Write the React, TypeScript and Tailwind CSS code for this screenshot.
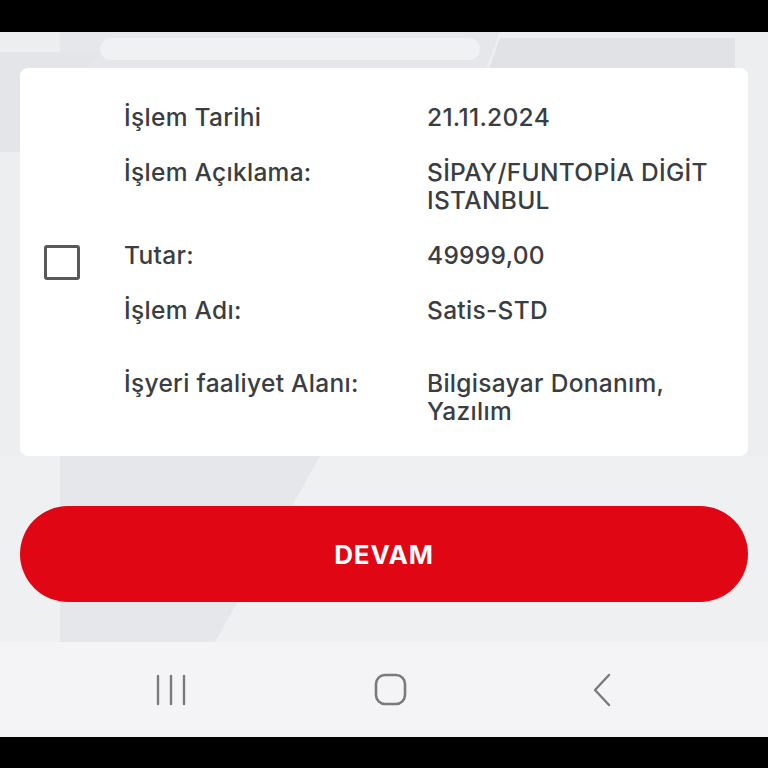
import React from "react";

const rows: { label: string; value: string[] }[] = [
  { label: "İşlem Tarihi", value: ["21.11.2024"] },
  { label: "İşlem Açıklama:", value: ["SİPAY/FUNTOPİA DİGİT", "ISTANBUL"] },
  { label: "Tutar:", value: ["49999,00"] },
  { label: "İşlem Adı:", value: ["Satis-STD"] },
  { label: "İşyeri faaliyet Alanı:", value: ["Bilgisayar Donanım,", "Yazılım"] },
];

function Background() {
  return (
    <svg
      className="absolute inset-0 h-full w-full"
      viewBox="0 0 768 610"
      preserveAspectRatio="none"
    >
      <rect x="0" y="0" width="768" height="610" fill="#eceef0" />
      <polygon points="60,0 500,0 270,610 60,610" fill="#e5e7ea" />
      <polygon points="500,6 735,6 735,40 488,40" fill="#e0e2e5" />
      <rect x="100" y="6" width="380" height="22" rx="11" fill="#f0f1f3" />
      <polygon points="0,20 100,20 20,120 0,120" fill="#e3e5e8" />
      <polygon points="320,424 768,424 768,610 215,610" fill="#eef0f2" />
      <rect x="0" y="424" width="60" height="186" fill="#eef0f2" />
    </svg>
  );
}

export default function App() {
  return (
    <div
      className="flex h-[768px] w-[768px] flex-col bg-black"
      style={{ fontFamily: "Inter, 'Open Sans', sans-serif" }}
    >
      <div className="h-[32px] shrink-0 bg-black" />
      <div className="relative flex h-[610px] shrink-0 flex-col px-[20px] pt-[36px]">
        <Background />
        <div className="relative flex h-[388px] items-center rounded-[8px] bg-white">
          <div className="flex w-[104px] shrink-0 justify-start pl-[24px]">
            <div className="h-[35px] w-[36px] rounded-[3px] border-[3px] border-[#58595b]" />
          </div>
          <div className="flex flex-col pt-[3px] text-[24.5px] leading-[28px] font-medium tracking-[0.3px] text-[#3a3d41]">
            {rows.map((r, i) => (
              <div
                key={i}
                className={
                  "flex " +
                  (i === 0 ? "" : i === 4 ? "mt-[45px]" : "mt-[27px]")
                }
              >
                <div className="w-[303px] shrink-0">{r.label}</div>
                <div>
                  {r.value.map((v, j) => (
                    <div key={j} className="h-[28px]">{v}</div>
                  ))}
                </div>
              </div>
            ))}
          </div>
        </div>
        <button className="relative mt-[50px] flex h-[96px] w-full items-center justify-center rounded-full bg-[#e10613]">
          <span className="text-[26px] font-bold tracking-[0.8px] text-white">
            DEVAM
          </span>
        </button>
      </div>
      <div className="flex h-[95px] shrink-0 items-center justify-between bg-[#f4f4f6] pl-[155px] pr-[156px]">
        <svg width="33" height="32" viewBox="0 0 33 32">
          <g stroke="#7a7a7c" strokeWidth="2.4" strokeLinecap="round">
            <line x1="3" y1="2" x2="3" y2="30" />
            <line x1="16" y1="2" x2="16" y2="30" />
            <line x1="29" y1="2" x2="29" y2="30" />
          </g>
        </svg>
        <svg width="33" height="33" viewBox="0 0 33 33">
          <rect x="2" y="2" width="29" height="29" rx="9" fill="none" stroke="#7a7a7c" strokeWidth="2.6" />
        </svg>
        <svg width="20" height="34" viewBox="0 0 20 34">
          <polyline points="17,2 3,17 17,32" fill="none" stroke="#7a7a7c" strokeWidth="2.4" strokeLinecap="round" strokeLinejoin="round" />
        </svg>
      </div>
      <div className="flex-1 bg-black" />
    </div>
  );
}
